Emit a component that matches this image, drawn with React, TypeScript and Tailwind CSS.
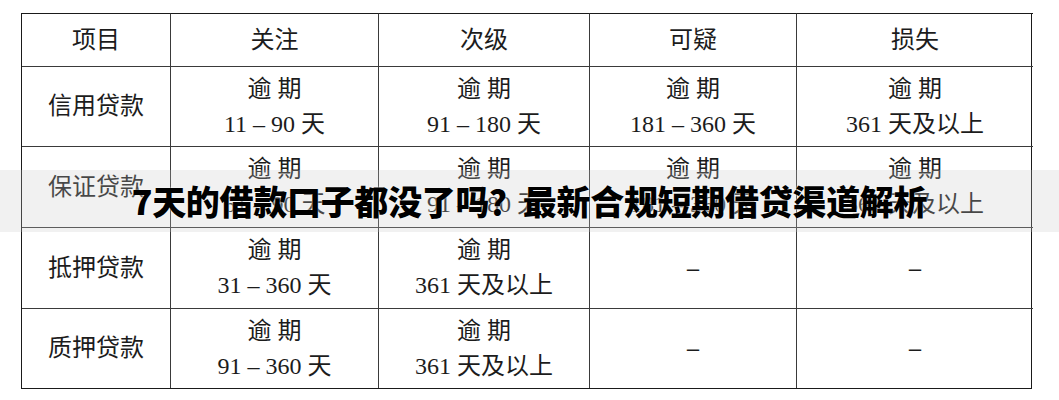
import { Fragment } from 'react';

const serif = { fontFamily: '"Liberation Serif", "Noto Sans CJK SC", serif' };

type Cell = string[];

const header = ['项目', '关注', '次级', '可疑', '损失'];

const rows: { name: string; cells: Cell[] }[] = [
  {
    name: '信用贷款',
    cells: [
      ['逾 期', '11 – 90 天'],
      ['逾 期', '91 – 180 天'],
      ['逾 期', '181 – 360 天'],
      ['逾 期', '361 天及以上'],
    ],
  },
  {
    name: '保证贷款',
    cells: [
      ['逾 期', '61 – 90 天'],
      ['逾 期', '91 – 180 天'],
      ['逾 期', '181 – 360 天'],
      ['逾 期', '361 天及以上'],
    ],
  },
  {
    name: '抵押贷款',
    cells: [['逾 期', '31 – 360 天'], ['逾 期', '361 天及以上'], ['–'], ['–']],
  },
  {
    name: '质押贷款',
    cells: [['逾 期', '91 – 360 天'], ['逾 期', '361 天及以上'], ['–'], ['–']],
  },
];

function TableCell({ lines, first }: { lines: string[]; first?: boolean }) {
  return (
    <div
      className={
        'flex flex-col items-center justify-center border-t border-[#3a3a3a] text-[24px] leading-[35px] text-[#1c1c1c] ' +
        (first ? '' : 'border-l')
      }
    >
      {lines.map((l, i) => (
        <span key={i} className={'whitespace-pre ' + (l === '–' ? 'font-bold' : '')}>
          {l}
        </span>
      ))}
    </div>
  );
}

export default function App() {
  return (
    <div className="relative h-[400px] w-[1059px] overflow-hidden bg-white" style={serif}>
      <div className="pl-[21px] pt-[13px]">
        <div className="grid w-[1011px] grid-cols-[148px_208px_211px_207px_237px] grid-rows-[53px_80px_81px_81px_80px] border-[1.5px] border-t-0 border-[#1a1a1a]">
          {header.map((h, i) => (
            <div
              key={h}
              className={
                'flex items-center justify-center border-t-[1.5px] border-[#1a1a1a] text-[24px] text-[#1c1c1c] ' +
                (i === 0 ? '' : 'border-l border-l-[#3a3a3a]')
              }
            >
              {h}
            </div>
          ))}
          {rows.map((r) => (
            <Fragment key={r.name}>
              <TableCell lines={[r.name]} first />
              {r.cells.map((c, j) => (
                <TableCell key={j} lines={c} />
              ))}
            </Fragment>
          ))}
        </div>
      </div>

      {/* title banner over the table */}
      <div className="absolute left-0 right-0 top-[170px] flex h-[62px] items-center justify-center bg-[rgba(200,200,200,0.25)]">
        <span
          className="whitespace-nowrap text-[34px] font-black leading-none tracking-[-0.3px] text-black"
          style={{
            fontFamily: '"Noto Sans CJK SC", "Noto Sans", sans-serif',
            textShadow: '0 0 2px #fff',
          }}
        >
          7天的借款口子都没了吗？最新合规短期借贷渠道解析
        </span>
      </div>
    </div>
  );
}
